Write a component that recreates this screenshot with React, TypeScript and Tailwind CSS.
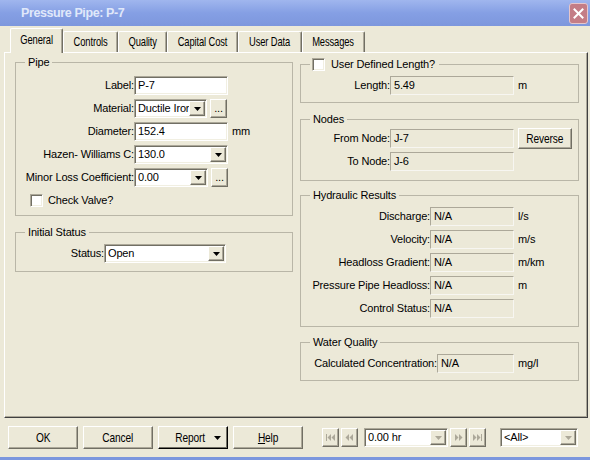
import React from "react";

const sunken =
  "bg-white border border-t-[#aca899] border-l-[#aca899] border-r-white border-b-white shadow-[inset_1px_1px_0_#716f64,inset_-1px_-1px_0_#f1efe2]";
const raised =
  "bg-[#ece9d8] border border-t-white border-l-white border-r-[#716f64] border-b-[#716f64] shadow-[inset_-1px_-1px_0_#aca899]";
const readonly =
  "bg-[#ece9d8] border border-t-[#aca899] border-l-[#aca899] border-r-[#f7f6f1] border-b-[#f7f6f1]";

function Tri({ color = "#000" }: { color?: string }) {
  return (
    <svg width="7" height="4" viewBox="0 0 7 4">
      <path d="M0 0H7L3.5 4Z" fill={color} />
    </svg>
  );
}

function DropBtn({ disabled = false }: { disabled?: boolean }) {
  return (
    <div className={`${raised} w-[16px] h-[15px] flex items-center justify-center shrink-0`}>
      <Tri color={disabled ? "#aca899" : "#000"} />
    </div>
  );
}

function Edit({ value, w }: { value: string; w: string }) {
  return (
    <div className={`${sunken} ${w} h-[19px] flex items-center pl-[3px] whitespace-nowrap overflow-hidden`}>
      {value}
    </div>
  );
}

function Combo({ value, w, disabled = false }: { value: string; w: string; disabled?: boolean }) {
  return (
    <div className={`${sunken} ${w} h-[19px] flex items-center pl-[3px] pr-[1px] shrink-0`}>
      <span className="flex-1 whitespace-nowrap overflow-hidden">{value}</span>
      <DropBtn disabled={disabled} />
    </div>
  );
}

function Dots() {
  return (
    <div className={`${raised} w-[17px] h-[19px] flex items-end justify-center pb-[3px] ml-[3px] leading-none`}>
      ...
    </div>
  );
}

function RO({ value, w }: { value: string; w: string }) {
  return (
    <div className={`${readonly} ${w} h-[19px] flex items-center pl-[3px] shrink-0`}>{value}</div>
  );
}

function Check() {
  return <div className={`${sunken} w-[13px] h-[13px] shrink-0`} />;
}

function Legend({ children }: { children: React.ReactNode }) {
  return <legend className="ml-[9px] px-[3px] leading-[13px]">{children}</legend>;
}

const fs = "border border-[#b9b6a7] min-w-0 w-full";

function Tab({ label, w, selected = false }: { label: string; w: string; selected?: boolean }) {
  return (
    <div
      className={`${w} ${
        selected ? "h-[25px] -mb-[1px] relative z-10 pb-[3px]" : "h-[21px]"
      } bg-[#ece9d8] border-t border-l border-t-white border-l-white border-r border-r-[#716f64] shadow-[inset_-1px_0_0_#aca899] rounded-t-[2px] flex items-center justify-center`}
    >
      <span className="inline-block text-[13px] scale-x-[0.72] whitespace-nowrap">{label}</span>
    </div>
  );
}

function Btn({ children, def = false }: { children: React.ReactNode; def?: boolean }) {
  return (
    <div
      className={`w-[70px] h-[23px] flex items-center justify-center ${
        def
          ? "bg-[#ece9d8] border border-t-white border-l-white border-r-black border-b-black shadow-[inset_-1px_-1px_0_#716f64]"
          : raised
      }`}
    >
      {children}
    </div>
  );
}

function NavIcon({ kind }: { kind: "first" | "prev" | "next" | "last" }) {
  const c = "#aca899";
  return (
    <svg width="9" height="7" viewBox="0 0 9 7">
      {kind === "first" && (
        <>
          <rect x="0" y="0" width="1" height="7" fill={c} />
          <path d="M5 0L1.5 3.5L5 7Z" fill={c} />
          <path d="M9 0L5.5 3.5L9 7Z" fill={c} />
        </>
      )}
      {kind === "prev" && (
        <>
          <path d="M4 0L0.5 3.5L4 7Z" fill={c} />
          <path d="M8 0L4.5 3.5L8 7Z" fill={c} />
        </>
      )}
      {kind === "next" && (
        <>
          <path d="M1 0L4.5 3.5L1 7Z" fill={c} />
          <path d="M5 0L8.5 3.5L5 7Z" fill={c} />
        </>
      )}
      {kind === "last" && (
        <>
          <path d="M0 0L3.5 3.5L0 7Z" fill={c} />
          <path d="M4 0L7.5 3.5L4 7Z" fill={c} />
          <rect x="8" y="0" width="1" height="7" fill={c} />
        </>
      )}
    </svg>
  );
}

function NavBtn({ kind }: { kind: "first" | "prev" | "next" | "last" }) {
  return (
    <div className={`${raised} w-[17px] h-[19px] flex items-center justify-center shrink-0`}>
      <NavIcon kind={kind} />
    </div>
  );
}

export default function App() {
  return (
    <div className="w-[590px] h-[460px] bg-[#ece9d8] flex flex-col overflow-hidden text-[11px] tracking-[-0.15px] text-black font-['Liberation_Sans',Arial,sans-serif]">
      {/* Title bar */}
      <div className="h-[26px] shrink-0 flex items-center justify-between pl-[21px] pr-[2px] bg-gradient-to-b from-[#a0b6ee] via-[#859fe4] to-[#7d97dd]">
        <span className="font-bold text-[12.5px] tracking-[-0.4px] text-[#e0e8fa]">Pressure Pipe: P-7</span>
        <div className="w-[19px] h-[21px] rounded-[3px] bg-[#c47d86] border border-[#e6c6cb] flex items-center justify-center">
          <svg width="11" height="11" viewBox="0 0 11 11">
            <path d="M1.5 1.5L9.5 9.5M9.5 1.5L1.5 9.5" stroke="#fff" strokeWidth="2" strokeLinecap="square" />
          </svg>
        </div>
      </div>

      {/* Tabs */}
      <div className="h-[26px] shrink-0 flex items-end pl-[10px] relative z-10">
        <Tab label="General" w="w-[53px]" selected />
        <Tab label="Controls" w="w-[55px]" />
        <Tab label="Quality" w="w-[49px]" />
        <Tab label="Capital Cost" w="w-[71px]" />
        <Tab label="User Data" w="w-[64px]" />
        <Tab label="Messages" w="w-[63px]" />
      </div>

      {/* Panel */}
      <div className="ml-[4px] mr-[2px] h-[366px] shrink-0 border border-t-white border-l-white border-r-[#404040] border-b-[#404040] shadow-[inset_-1px_-1px_0_#aca899] flex gap-[7px] pl-[10px]">
        {/* Left column */}
        <div className="w-[278px] pt-[3px] flex flex-col">
          <fieldset className={`${fs} pb-[5px]`}>
            <Legend>Pipe</Legend>
            <div className="flex flex-col gap-[4px] mt-[7px]">
              <div className="flex items-center h-[19px]">
                <span className="w-[118px] text-right shrink-0">Label:</span>
                <Edit value="P-7" w="w-[94px]" />
              </div>
              <div className="flex items-center h-[19px]">
                <span className="w-[118px] text-right shrink-0">Material:</span>
                <Combo value="Ductile Iron" w="w-[73px]" />
                <Dots />
              </div>
              <div className="flex items-center h-[19px]">
                <span className="w-[118px] text-right shrink-0">Diameter:</span>
                <Edit value="152.4" w="w-[94px]" />
                <span className="ml-[4px]">mm</span>
              </div>
              <div className="flex items-center h-[19px]">
                <span className="w-[118px] text-right shrink-0">Hazen- Williams C:</span>
                <Combo value="130.0" w="w-[94px]" />
              </div>
              <div className="flex items-center h-[19px]">
                <span className="w-[118px] text-right shrink-0">Minor Loss Coefficient:</span>
                <Combo value="0.00" w="w-[74px]" />
                <Dots />
              </div>
              <div className="flex items-center h-[19px] pl-[14px] gap-[5px]">
                <Check />
                <span>Check Valve?</span>
              </div>
            </div>
          </fieldset>

          <fieldset className={`${fs} mt-[10px] pb-[8px]`}>
            <Legend>Initial Status</Legend>
            <div className="flex items-center h-[19px] mt-[5px]">
              <span className="w-[88px] text-right shrink-0">Status:</span>
              <Combo value="Open" w="w-[122px]" />
            </div>
          </fieldset>
        </div>

        {/* Right column */}
        <div className="w-[279px] pt-[5px] flex flex-col">
          <fieldset className={`${fs} pb-[7px]`}>
            <legend className="ml-[9px] px-[2px] leading-[13px]">
              <span className="flex items-center gap-[6px]">
                <Check />
                <span className="pr-[2px]">User Defined Length?</span>
              </span>
            </legend>
            <div className="flex items-center h-[19px] mt-[5px]">
              <span className="w-[89px] text-right shrink-0">Length:</span>
              <RO value="5.49" w="w-[124px]" />
              <span className="ml-[4px]">m</span>
            </div>
          </fieldset>

          <fieldset className={`${fs} mt-[10px] pb-[9px]`}>
            <Legend>Nodes</Legend>
            <div className="flex flex-col gap-[4px] mt-[3px]">
              <div className="flex items-center h-[19px]">
                <span className="w-[89px] text-right shrink-0">From Node:</span>
                <RO value="J-7" w="w-[124px]" />
                <div className={`${raised} ml-[4px] w-[54px] h-[21px] flex items-center justify-center shrink-0`}>
                  <span className="inline-block text-[13px] scale-x-[0.78]">Reverse</span>
                </div>
              </div>
              <div className="flex items-center h-[19px]">
                <span className="w-[89px] text-right shrink-0">To Node:</span>
                <RO value="J-6" w="w-[124px]" />
              </div>
            </div>
          </fieldset>

          <fieldset className={`${fs} mt-[8px] pb-[8px]`}>
            <Legend>Hydraulic Results</Legend>
            <div className="flex flex-col gap-[4px] mt-[5px]">
              {[
                ["Discharge:", "l/s"],
                ["Velocity:", "m/s"],
                ["Headloss Gradient:", "m/km"],
                ["Pressure Pipe Headloss:", "m"],
                ["Control Status:", ""],
              ].map(([l, u]) => (
                <div key={l} className="flex items-center h-[19px]">
                  <span className="w-[129px] text-right shrink-0 whitespace-nowrap">{l}</span>
                  <RO value="N/A" w="w-[84px]" />
                  {u && <span className="ml-[4px]">{u}</span>}
                </div>
              ))}
            </div>
          </fieldset>

          <fieldset className={`${fs} mt-[9px] pb-[7px]`}>
            <Legend>Water Quality</Legend>
            <div className="flex items-center h-[19px] mt-[5px]">
              <span className="w-[136px] text-right shrink-0 whitespace-nowrap">Calculated Concentration:</span>
              <RO value="N/A" w="w-[77px]" />
              <span className="ml-[4px]">mg/l</span>
            </div>
          </fieldset>
        </div>
      </div>

      {/* Bottom buttons */}
      <div className="mt-[8px] h-[23px] shrink-0 flex items-center pl-[8px]">
        <div className="flex gap-[5px] text-[13px]">
          <Btn>
            <span className="inline-block scale-x-[0.78]">OK</span>
          </Btn>
          <Btn>
            <span className="inline-block scale-x-[0.78]">Cancel</span>
          </Btn>
          <Btn def>
            <span className="inline-block scale-x-[0.78] ml-[6px]">Report</span>
            <span className="ml-[4px] flex items-center">
              <Tri />
            </span>
          </Btn>
          <Btn>
            <span className="inline-block scale-x-[0.78]">
              <span className="underline">H</span>elp
            </span>
          </Btn>
        </div>
        <div className="ml-[19px] flex items-center">
          <NavBtn kind="first" />
          <div className="ml-[2px]">
            <NavBtn kind="prev" />
          </div>
          <div className="ml-[6px]">
            <Combo value="0.00 hr" w="w-[84px]" disabled />
          </div>
          <div className="ml-[2px]">
            <NavBtn kind="next" />
          </div>
          <div className="ml-[2px]">
            <NavBtn kind="last" />
          </div>
          <div className="ml-[14px]">
            <Combo value="<All>" w="w-[78px]" disabled />
          </div>
        </div>
      </div>
      <div className="mt-[8px] h-[3px] shrink-0 bg-[#7c97de]" />
    </div>
  );
}
